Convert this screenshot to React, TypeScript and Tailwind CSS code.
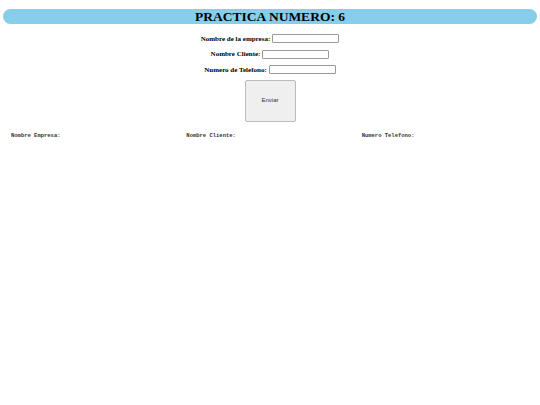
export default function App() {
  return (
    <div className="min-h-[405px] bg-white px-[3px] pt-[9px]">
      <div className="flex h-[15px] items-center justify-center rounded-full bg-[#87ceeb]">
        <h1 className="font-['Liberation_Serif',serif] text-[13.5px] font-bold leading-none text-black">
          PRACTICA NUMERO: 6
        </h1>
      </div>

      <form className="mt-[7px] flex flex-col items-center font-['Liberation_Serif',serif] text-[7px] font-bold text-black">
        <div className="flex h-[15.5px] items-center gap-[2px]">
          <label>Nombre de la empresa:</label>
          <input className="h-[9px] w-[67px] rounded-[1px] border border-[#999] bg-white" />
        </div>
        <div className="flex h-[15.5px] items-center gap-[2px]">
          <label>Nombre Cliente:</label>
          <input className="h-[9px] w-[67px] rounded-[1px] border border-[#999] bg-white" />
        </div>
        <div className="flex h-[15.5px] items-center gap-[2px]">
          <label>Numero de Telefono:</label>
          <input className="h-[9px] w-[67px] rounded-[1px] border border-[#999] bg-white" />
        </div>
        <button
          type="button"
          className="mt-[2px] h-[42px] w-[51px] rounded-[2px] border border-[#bbb] bg-[#efefef] font-['Liberation_Sans',sans-serif] text-[6px] font-normal text-[#333]"
        >
          Enviar
        </button>
      </form>

      <div className="mt-[10px] grid grid-cols-3 pl-[8px] font-['Liberation_Mono',monospace] text-[5.5px] font-bold text-[#333]">
        <div>Nombre Empresa:</div>
        <div>Nombre Cliente:</div>
        <div>Numero Telefono:</div>
      </div>
    </div>
  );
}
